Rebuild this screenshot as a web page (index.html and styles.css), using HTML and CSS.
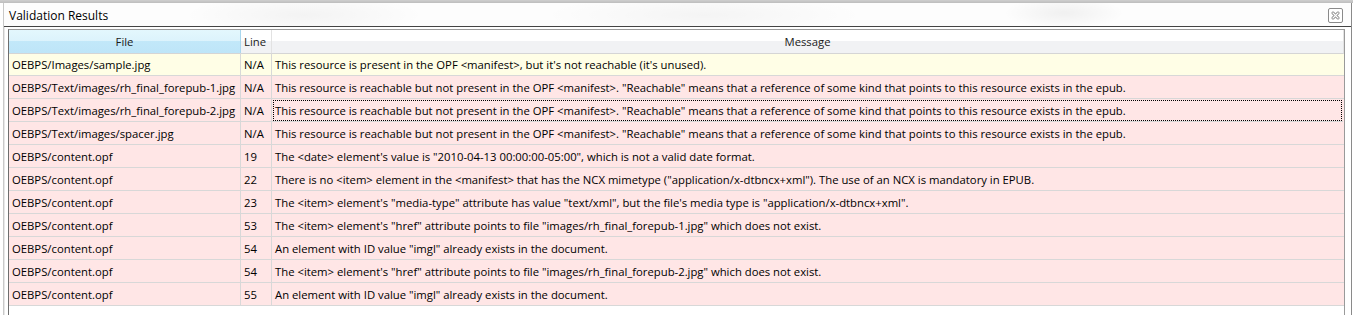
FILE: index.html
```html
<!DOCTYPE html>
<html>
<head>
<meta charset="utf-8">
<link rel="stylesheet" href="styles.css">
</head>
<body>
<div class="app">
  <div class="backdrop"></div>
  <div class="window">
    <div class="titlebar">
      <span class="title">Validation Results</span>
      <span class="close"><svg width="9" height="9" viewBox="0 0 9 9"><path d="M1 1h2v1h1v1h1v-1h1v-1h2v2h-1v1h-1v1h1v1h1v2h-2v-1h-1v-1h-1v1h-1v1h-2v-2h1v-1h1v-1h-1v-1h-1z" fill="none" stroke="#8a8a8a" stroke-width="0.8"/></svg></span>
    </div>
    <div class="body">
      <div class="table">
        <div class="hrow">
          <div class="hc sorted">File</div>
          <div class="hc left">Line</div>
          <div class="hc">Message</div>
        </div>
        <div class="row warn"><div class="c">OEBPS/Images/sample.jpg</div><div class="c">N/A</div><div class="c">This resource is present in the OPF &lt;manifest&gt;, but it's not reachable (it's unused).</div></div>
        <div class="row err"><div class="c">OEBPS/Text/images/rh_final_forepub-1.jpg</div><div class="c">N/A</div><div class="c">This resource is reachable but not present in the OPF &lt;manifest&gt;. "Reachable" means that a reference of some kind that points to this resource exists in the epub.</div></div>
        <div class="row err"><div class="c">OEBPS/Text/images/rh_final_forepub-2.jpg</div><div class="c">N/A</div><div class="c focus">This resource is reachable but not present in the OPF &lt;manifest&gt;. "Reachable" means that a reference of some kind that points to this resource exists in the epub.</div></div>
        <div class="row err"><div class="c">OEBPS/Text/images/spacer.jpg</div><div class="c">N/A</div><div class="c">This resource is reachable but not present in the OPF &lt;manifest&gt;. "Reachable" means that a reference of some kind that points to this resource exists in the epub.</div></div>
        <div class="row err"><div class="c">OEBPS/content.opf</div><div class="c">19</div><div class="c">The &lt;date&gt; element's value is "2010-04-13 00:00:00-05:00", which is not a valid date format.</div></div>
        <div class="row err"><div class="c">OEBPS/content.opf</div><div class="c">22</div><div class="c">There is no &lt;item&gt; element in the &lt;manifest&gt; that has the NCX mimetype ("application/x-dtbncx+xml"). The use of an NCX is mandatory in EPUB.</div></div>
        <div class="row err"><div class="c">OEBPS/content.opf</div><div class="c">23</div><div class="c">The &lt;item&gt; element's "media-type" attribute has value "text/xml", but the file's media type is "application/x-dtbncx+xml".</div></div>
        <div class="row err"><div class="c">OEBPS/content.opf</div><div class="c">53</div><div class="c">The &lt;item&gt; element's "href" attribute points to file "images/rh_final_forepub-1.jpg" which does not exist.</div></div>
        <div class="row err"><div class="c">OEBPS/content.opf</div><div class="c">54</div><div class="c">An element with ID value "imgl" already exists in the document.</div></div>
        <div class="row err"><div class="c">OEBPS/content.opf</div><div class="c">54</div><div class="c">The &lt;item&gt; element's "href" attribute points to file "images/rh_final_forepub-2.jpg" which does not exist.</div></div>
        <div class="row err"><div class="c">OEBPS/content.opf</div><div class="c">55</div><div class="c">An element with ID value "imgl" already exists in the document.</div></div>
      </div>
    </div>
  </div>
</div>
</body>
</html>
```
FILE: styles.css
```css
html, body {
  margin: 0;
  padding: 0;
  background: #ffffff;
}
body {
  width: 1353px;
  height: 315px;
  overflow: hidden;
  font-family: "Open Sans", "Noto Sans", sans-serif;
  font-size: 11.3px;
  color: #000;
}
.app {
  display: flex;
  flex-direction: column;
  height: 315px;
  background: linear-gradient(to bottom, #cfcfcf 0, #bdbdbd 3px, #ffffff 3px);
}
.backdrop {
  height: 3px;
}
.window {
  flex: 1;
  display: flex;
  flex-direction: column;
  margin-left: 3px;
  border-left: 1px solid #c9c9c9;
  border-right: 1px solid #8a8a8a;
  margin-right: 1px;
  background:
    radial-gradient(ellipse 120px 20px at 300px 12px, rgba(0,0,0,0.04), transparent),
    radial-gradient(ellipse 160px 20px at 700px 12px, rgba(0,0,0,0.035), transparent),
    radial-gradient(ellipse 60px 16px at 1060px 10px, rgba(0,0,0,0.05), transparent),
    #fdfdfd;
}
.titlebar {
  height: 23px;
  display: flex;
  align-items: center;
  justify-content: space-between;
  padding: 0 8px 0 5px;
  border-bottom: 1px solid #444;
}
.title {
  font-size: 12px;
  color: #000;
  padding-top: 1px;
}
.close {
  width: 13px;
  height: 13px;
  border: 1px solid #8a8a8a;
  border-radius: 2px;
  background: #fff;
  display: flex;
  align-items: center;
  justify-content: center;
  margin-top: 1px;
}
.body {
  flex: 1;
  display: flex;
  border-left: 1px solid #e8e8e8;
  padding-left: 3px;
  padding-top: 2px;
  background: #ffffff;
}
.table {
  flex: 1;
  border-left: 1px solid #6e6e6e;
  border-top: 1px solid #9a9a9a;
  border-right: 1px solid #9a9a9a;
  margin-right: 6px;
  background: #fff;
}
.hrow, .row {
  display: grid;
  grid-template-columns: 232px 31px 1fr;
  height: 23px;
}
.hc {
  text-align: center;
  line-height: 22px;
  padding-top: 1px;
  box-sizing: border-box;
  border-bottom: 1px solid #d5d5d5;
  border-right: 1px solid #e2e2e2;
  color: #1a1a1a;
  background: linear-gradient(to bottom, #ffffff 0, #ffffff 11px, #f1f2f4 11px, #f1f2f4 100%);
}
.hc.left {
  text-align: left;
  padding-left: 3px;
}
.hc.sorted {
  background: linear-gradient(to bottom, #e3f7fd 0, #dcf3fc 11px, #c2e8f9 11px, #bee5f8 100%);
  border-right: 1px solid #a9d7ee;
}
.c {
  line-height: 22px;
  padding-left: 3px;
  padding-top: 1px;
  box-sizing: border-box;
  border-right: 1px solid #d8d8d8;
  border-bottom: 1px solid #d8d8d8;
  white-space: nowrap;
  overflow: hidden;
}
.c:last-child {
  border-right: none;
}
.warn { background: #fffee6; }
.err { background: #ffe6e6; }
.c.focus {
  outline: 1px dotted #000;
  outline-offset: -2px;
  margin-right: 1px;
}
```
